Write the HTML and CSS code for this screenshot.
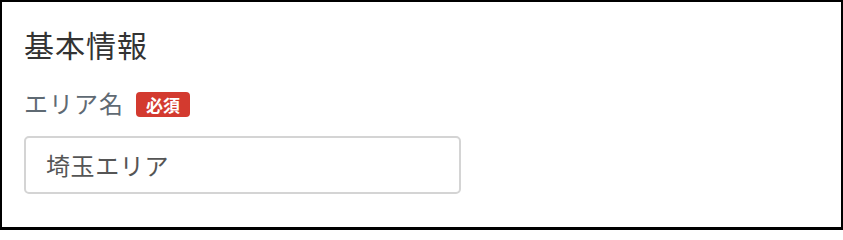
FILE: index.html
```html
<!DOCTYPE html>
<html lang="ja">
<head>
<meta charset="utf-8">
<link rel="stylesheet" href="styles.css">
</head>
<body>
<div class="panel">
  <h2 class="title">基本情報</h2>
  <div class="label-row">
    <span class="label">エリア名</span>
    <span class="badge">必須</span>
  </div>
  <div class="input">埼玉エリア</div>
</div>
</body>
</html>
```

FILE: styles.css
```css
html, body {
  margin: 0;
  padding: 0;
  background: #fff;
}
.panel {
  box-sizing: border-box;
  width: 843px;
  height: 230px;
  border: 2px solid #000;
  border-bottom-width: 3px;
  padding: 24px 0 0 22px;
  font-family: "Noto Sans CJK JP", "Noto Sans", sans-serif;
  display: flex;
  flex-direction: column;
  align-items: flex-start;
}
.title {
  margin: 0;
  font-size: 30px;
  line-height: 36px;
  font-weight: 400;
  color: #333;
  letter-spacing: 1px;
}
.label-row {
  display: flex;
  align-items: center;
  gap: 12px;
  margin-top: 29px;
  height: 26px;
}
.label {
  font-size: 24px;
  line-height: 24px;
  color: #5f6a73;
  letter-spacing: 1px;
  margin-top: -2px;
}
.badge {
  box-sizing: border-box;
  width: 54px;
  height: 25px;
  border-radius: 4px;
  background: #d33a2f;
  color: #fff;
  font-size: 17px;
  font-weight: 700;
  line-height: 25px;
  text-align: center;
}
.input {
  box-sizing: border-box;
  margin-top: 19px;
  width: 437px;
  height: 58px;
  border: 2px solid #d4d4d4;
  border-radius: 5px;
  padding: 0 0 0 20px;
  font-size: 24px;
  line-height: 54px;
  color: #555;
  letter-spacing: 0.6px;
}
```
